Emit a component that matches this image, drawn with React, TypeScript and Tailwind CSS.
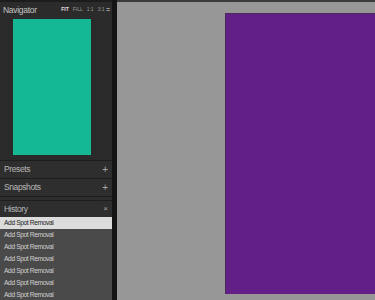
const rows = Array.from({ length: 7 });

export default function App() {
  return (
    <div className="flex h-[300px] w-[375px] overflow-hidden bg-[#979797] font-['Liberation_Sans',sans-serif]">
      <div className="flex w-[112px] shrink-0 flex-col bg-[#2b2b2b]">
        <div className="flex h-[18px] shrink-0 items-center justify-between border-t-2 border-[#1c1c1c] pl-[3px] pr-[2px]">
          <span className="text-[8.5px] tracking-[-0.3px] text-[#c4c4c4]">Navigator</span>
          <div className="flex items-center gap-[4px] text-[5px] text-[#9a9a9a]">
            <span className="font-bold text-[#e0e0e0]">FIT</span>
            <span>FILL</span>
            <span>1:1</span>
            <span>3:1 ≑</span>
          </div>
        </div>
        <div className="h-[142px] shrink-0 bg-[#2a2a2a] pl-[13px] pt-[1px]">
          <div className="h-[136px] w-[78px] bg-[#14b894]" />
        </div>
        <div className="shrink-0 border-t border-[#1e1e1e] bg-[#2e2e2e]">
          <div className="flex h-[18px] items-center justify-between border-b border-[#1e1e1e] px-[4px]">
            <span className="text-[8.5px] tracking-[-0.4px] text-[#b8b8b8]">Presets</span>
            <span className="text-[10px] text-[#a8a8a8]">+</span>
          </div>
          <div className="flex h-[18px] items-center justify-between border-b border-[#1e1e1e] px-[4px]">
            <span className="text-[8.5px] tracking-[-0.4px] text-[#b8b8b8]">Snapshots</span>
            <span className="text-[10px] text-[#a8a8a8]">+</span>
          </div>
          <div className="mt-[3px] flex h-[17px] items-center justify-between border-t border-[#1e1e1e] px-[4px]">
            <span className="text-[8.5px] tracking-[-0.4px] text-[#b8b8b8]">History</span>
            <span className="text-[8px] text-[#a8a8a8]">×</span>
          </div>
        </div>
        <div className="flex-1 overflow-hidden bg-[#4a4a4a]">
          <div className="flex h-[12px] items-center bg-[#dcdcdc] px-[4px] text-[6.7px] tracking-[-0.4px] text-[#222]">
            Add Spot Removal
          </div>
          {rows.map((_, i) => (
            <div key={i} className="flex h-[12px] items-center px-[4px] text-[6.7px] tracking-[-0.4px] text-[#d0d0d0]">
              Add Spot Removal
            </div>
          ))}
        </div>
      </div>
      <div className="w-[5px] shrink-0 bg-[#151515]" />
      <div className="flex-1 border-t-2 border-[#3a3a3a] pl-[108px] pt-[11px]">
        <div className="h-[281px] border-l border-t border-[#4a2a5a] bg-[#621f88]" />
      </div>
    </div>
  );
}
